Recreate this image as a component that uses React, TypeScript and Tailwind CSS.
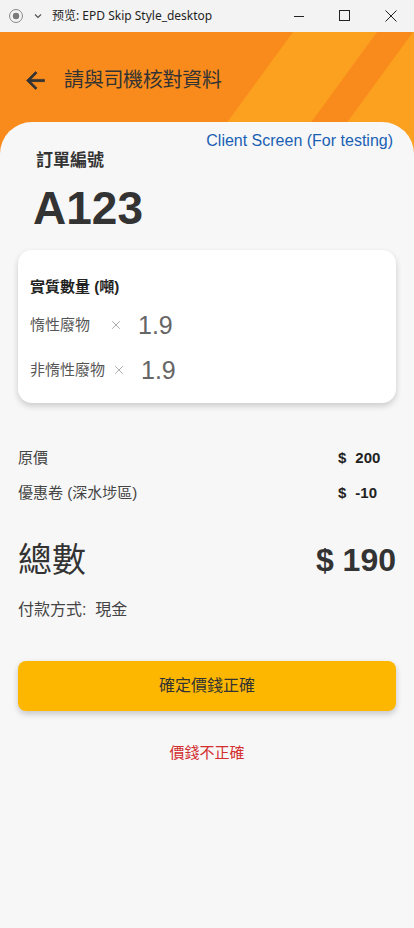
import { X } from "lucide-react";

const font = { fontFamily: '"Liberation Sans", "Noto Sans CJK TC", sans-serif' };

function TitleBar() {
  return (
    <div className="flex h-[32px] items-center bg-[#f3f3f3] text-[#1f1f1f]">
      <svg width="16" height="16" viewBox="0 0 16 16" className="ml-[8px]">
        <circle cx="8" cy="8" r="6.5" fill="none" stroke="#8a8a8a" strokeWidth="1" />
        <circle cx="8" cy="8" r="3.2" fill="#7a7a7a" />
      </svg>
      <svg width="10" height="10" viewBox="0 0 10 10" className="ml-[9px]">
        <path d="M2 3.5 5 6.5 8 3.5" fill="none" stroke="#555" strokeWidth="1.2" />
      </svg>
      <span
        className="ml-[9px] text-[12px] leading-none"
        style={{ fontFamily: '"Noto Sans", "Noto Sans CJK SC", sans-serif' }}
      >
        预览: EPD Skip Style_desktop
      </span>
      <div className="ml-auto flex h-full items-center">
        <div className="flex h-full w-[46px] items-center justify-center">
          <svg width="12" height="12" viewBox="0 0 12 12">
            <path d="M1 6.5h10" stroke="#222" strokeWidth="1" />
          </svg>
        </div>
        <div className="flex h-full w-[46px] items-center justify-center">
          <svg width="12" height="12" viewBox="0 0 12 12">
            <rect x="0.5" y="0.5" width="10" height="10" fill="none" stroke="#222" strokeWidth="1" />
          </svg>
        </div>
        <div className="flex h-full w-[46px] items-center justify-center">
          <svg width="12" height="12" viewBox="0 0 12 12">
            <path d="M0.5 0.5 11.5 11.5M11.5 0.5 0.5 11.5" stroke="#222" strokeWidth="1" />
          </svg>
        </div>
      </div>
    </div>
  );
}

export default function App() {
  return (
    <div className="flex min-h-screen w-full flex-col bg-[#f7f7f7]" style={font}>
      <TitleBar />
      <div className="relative flex flex-1 flex-col bg-[#f98b1c]">
        <svg
          className="absolute left-0 top-0"
          width="414"
          height="140"
          viewBox="0 0 414 140"
        >
          <polygon points="293,0 377,0 275,140 191,140" fill="#fca01f" />
          <polygon points="413,0 500,0 398,140 311,140" fill="#fca01f" />
        </svg>

        <header className="relative flex h-[90px] items-center pl-[22px] pt-[6px] text-[#333]">
          <svg width="27" height="27" viewBox="0 0 24 24" fill="#333">
            <path d="M20 11H7.83l5.59-5.59L12 4l-8 8 8 8 1.41-1.41L7.83 13H20v-2z" stroke="#333" strokeWidth="0.6" />
          </svg>
          <h1 className="ml-[15px] text-[20px] font-normal leading-none tracking-[-0.3px]">
            請與司機核對資料
          </h1>
        </header>

        <main className="relative flex flex-1 flex-col rounded-t-[32px] bg-[#f7f7f7] pb-10">
          <div className="flex items-start justify-between pt-[9px]">
            <div className="mt-[18px] pl-[36px] text-[17px] font-semibold leading-[24px] text-[#333]">
              訂單編號
            </div>
            <div className="pr-[21px] text-[16px] leading-[20px] text-[#1a5fb4]">
              Client Screen (For testing)
            </div>
          </div>

          <div className="mt-[12px] pl-[33px] text-[46px] font-bold leading-none text-[#333]">
            A123
          </div>

          <section className="mx-[18px] mt-[19px] rounded-[14px] bg-white px-[12px] pb-[17px] pt-[27px] shadow-[0_3px_6px_rgba(0,0,0,0.18)]">
            <div className="text-[15px] font-bold leading-[20px] text-[#222]">實質數量 (噸)</div>
            <div className="mt-[12px] flex h-[32px] items-center">
              <span className="min-w-[72px] text-[15px] text-[#555]">惰性廢物</span>
              <X className="ml-[7px] h-[14px] w-[14px] text-[#888]" strokeWidth={1.2} />
              <span className="ml-[15px] text-[25px] leading-none text-[#666]">1.9</span>
            </div>
            <div className="mt-[13px] flex h-[32px] items-center">
              <span className="min-w-[72px] text-[15px] text-[#555]">非惰性廢物</span>
              <X className="ml-[7px] h-[14px] w-[14px] text-[#888]" strokeWidth={1.2} />
              <span className="ml-[15px] text-[25px] leading-none text-[#666]">1.9</span>
            </div>
          </section>

          <div className="mt-[44px] flex h-[22px] items-center px-[18px] text-[15px]">
            <span className="flex-1 text-[#444]">原價</span>
            <span className="flex w-[58px] gap-[9px] font-bold text-[#222]">
              <span>$</span>
              <span>200</span>
            </span>
          </div>
          <div className="mt-[13px] flex h-[22px] items-center px-[18px] text-[15px]">
            <span className="flex-1 text-[#444]">優惠卷 (深水埗區)</span>
            <span className="flex w-[58px] gap-[9px] font-bold text-[#222]">
              <span>$</span>
              <span>-10</span>
            </span>
          </div>

          <div className="mt-[36px] flex h-[40px] items-center justify-between px-[18px]">
            <span className="text-[34px] font-normal text-[#333]">總數</span>
            <span className="text-[32px] font-bold text-[#333]">$ 190</span>
          </div>

          <div className="mt-[18px] px-[18px] text-[16px] leading-[24px] text-[#444]">付款方式:&nbsp; 現金</div>

          <button className="mx-[18px] mt-[39px] flex h-[50px] items-center justify-center rounded-[8px] bg-[#fdb700] text-[16px] text-[#333] shadow-[0_3px_6px_rgba(0,0,0,0.2)]">
            確定價錢正確
          </button>

          <div className="mt-[31px] text-center text-[15px] leading-[22px] text-[#d32f2f]">價錢不正確</div>
        </main>
      </div>
    </div>
  );
}
